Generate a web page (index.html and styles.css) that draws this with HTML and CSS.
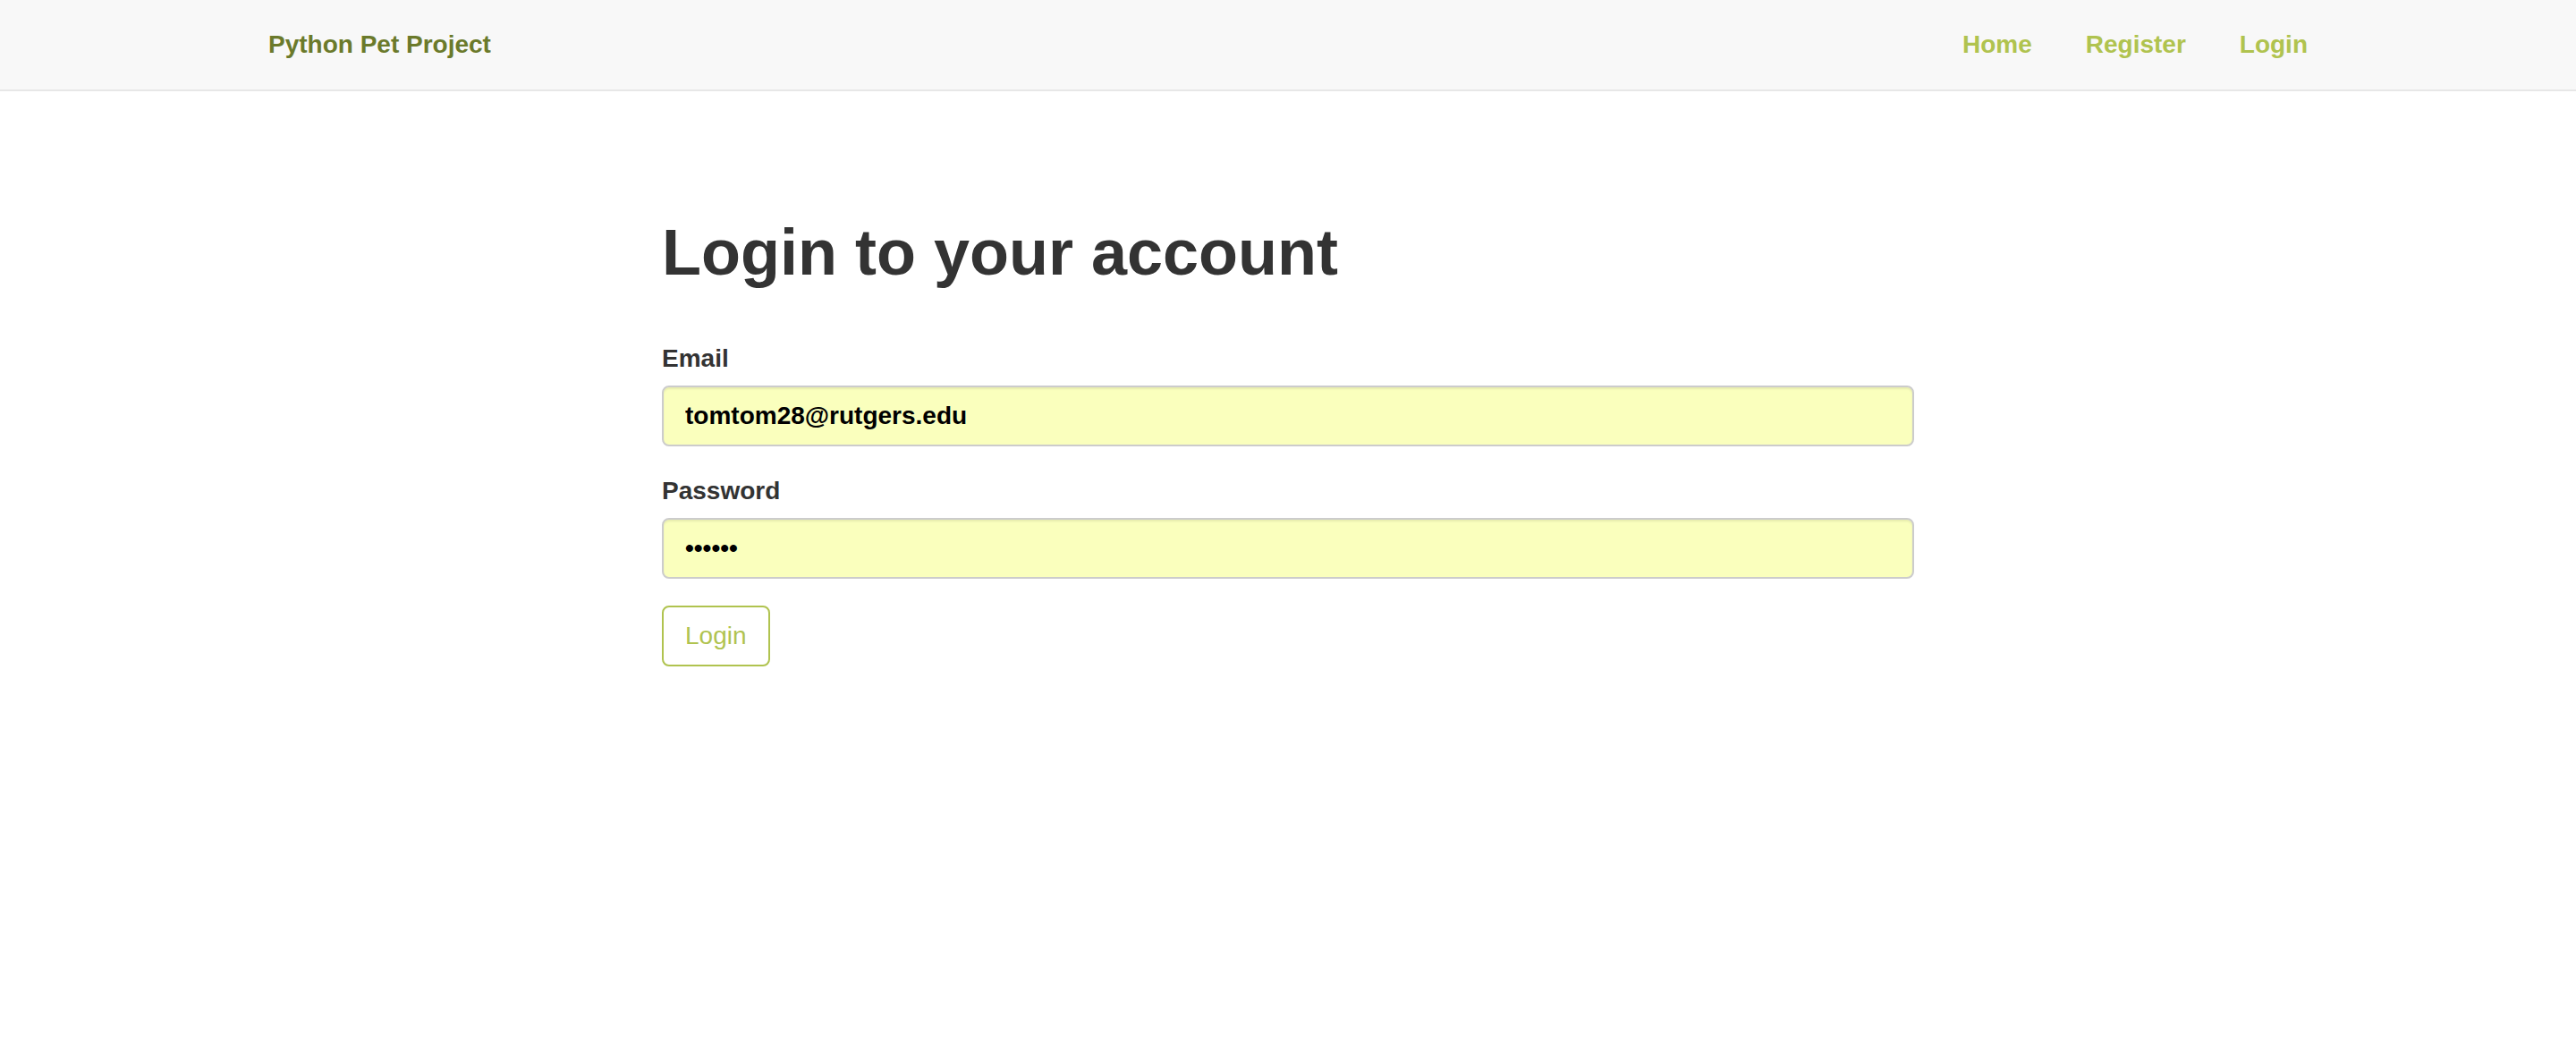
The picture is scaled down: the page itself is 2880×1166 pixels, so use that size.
FILE: index.html
```html
<!DOCTYPE html>
<html lang="en">
<head>
<meta charset="utf-8">
<title>Login - Python Pet Project</title>
<link rel="stylesheet" href="styles.css">
</head>
<body>
<nav class="navbar">
  <div class="nav-inner">
    <a class="brand" href="#">Python Pet Project</a>
    <ul class="nav-links">
      <li><a href="#">Home</a></li>
      <li><a href="#">Register</a></li>
      <li><a href="#">Login</a></li>
    </ul>
  </div>
</nav>
<main class="main">
  <div class="panel">
    <h1 class="title">Login to your account</h1>
    <form class="form">
      <div class="form-group">
        <label class="label" for="email">Email</label>
        <input class="input" id="email" type="email" value="tomtom28@rutgers.edu">
      </div>
      <div class="form-group">
        <label class="label" for="password">Password</label>
        <input class="input" id="password" type="password" value="secret">
      </div>
      <button class="btn" type="button">Login</button>
    </form>
  </div>
</main>
</body>
</html>
```
FILE: styles.css
```css
* { box-sizing: border-box; }
html, body { margin: 0; padding: 0; }
body {
  font-family: "Liberation Sans", Arial, Helvetica, sans-serif;
  font-size: 28px;
  line-height: 40px;
  color: #333333;
  background: #ffffff;
}
.navbar {
  height: 102px;
  background: #f8f8f8;
  border-bottom: 2px solid #e7e7e7;
}
.nav-inner {
  width: 2340px;
  margin: 0 auto;
  height: 100px;
  display: flex;
  align-items: center;
  justify-content: space-between;
}
.brand {
  padding: 0 30px;
  font-size: 28px;
  font-weight: bold;
  color: #6b7a2b;
  text-decoration: none;
  line-height: 100px;
}
.nav-links {
  list-style: none;
  margin: 0;
  padding: 0;
  display: flex;
}
.nav-links a {
  display: block;
  padding: 0 30px;
  line-height: 100px;
  font-weight: bold;
  font-size: 28px;
  color: #b0c34f;
  text-decoration: none;
}
.main {
  padding-top: 141px;
}
.panel {
  width: 1400px;
  margin-left: 740px;
}
.title {
  margin: 0 0 59px 0;
  font-size: 72px;
  line-height: 79px;
  font-weight: bold;
  color: #333333;
}
.form-group {
  margin-bottom: 30px;
}
.label {
  display: block;
  margin-bottom: 10px;
  font-weight: bold;
  font-size: 28px;
  line-height: 40px;
  color: #333333;
}
.input {
  display: block;
  width: 100%;
  height: 68px;
  padding: 12px 24px;
  font-family: "Liberation Sans", Arial, Helvetica, sans-serif;
  font-size: 28px;
  font-weight: bold;
  line-height: 40px;
  color: #000000;
  background: #faffbd;
  border: 2px solid #cccccc;
  border-radius: 8px;
  box-shadow: inset 0 2px 2px rgba(0, 0, 0, 0.075);
  outline: none;
}
.btn {
  display: inline-block;
  height: 68px;
  padding: 12px 24px;
  font-family: "Liberation Sans", Arial, Helvetica, sans-serif;
  font-size: 28px;
  line-height: 40px;
  color: #b0c34f;
  background: #ffffff;
  border: 2px solid #b0c34f;
  border-radius: 8px;
  cursor: pointer;
}
```
